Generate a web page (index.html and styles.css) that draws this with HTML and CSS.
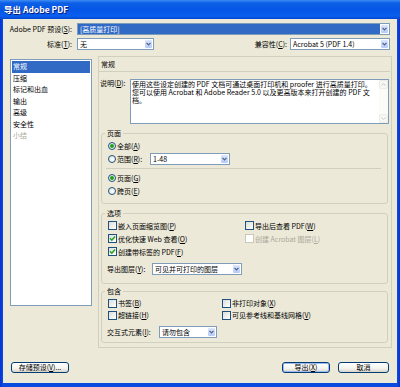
FILE: index.html
```html
<!DOCTYPE html>
<html lang="zh-CN">
<head>
<meta charset="utf-8">
<title>导出 Adobe PDF</title>
<link rel="stylesheet" href="styles.css">
</head>
<body>
<div class="window">
  <div class="titlebar"><span class="title">导出 Adobe PDF</span></div>
  <div class="client">
    <div class="row row-preset">
      <span class="lbl lbl-main">Adobe PDF 预设(<u>S</u>):</span>
      <div class="select select-hl grow"><span class="val">[高质量打印]</span><span class="arrow"><svg width="5" height="4" viewBox="0 0 5 4"><polyline points="0.5,0.8 2.5,2.8 4.5,0.8" fill="none" stroke="#4D6185" stroke-width="1.2"/></svg></span></div>
    </div>
    <div class="row row-std">
      <span class="lbl lbl-main">标准(<u>T</u>):</span>
      <div class="select w-std"><span class="val">无</span><span class="arrow"><svg width="5" height="4" viewBox="0 0 5 4"><polyline points="0.5,0.8 2.5,2.8 4.5,0.8" fill="none" stroke="#4D6185" stroke-width="1.2"/></svg></span></div>
      <span class="spacer"></span>
      <span class="lbl lbl-compat">兼容性(<u>C</u>):</span>
      <div class="select w-compat"><span class="val">Acrobat 5 (PDF 1.4)</span><span class="arrow"><svg width="5" height="4" viewBox="0 0 5 4"><polyline points="0.5,0.8 2.5,2.8 4.5,0.8" fill="none" stroke="#4D6185" stroke-width="1.2"/></svg></span></div>
    </div>
    <div class="main">
      <ul class="nav">
        <li class="sel">常规</li>
        <li>压缩</li>
        <li>标记和出血</li>
        <li>输出</li>
        <li>高级</li>
        <li>安全性</li>
        <li class="dis">小结</li>
      </ul>
      <div class="panel">
        <div class="panel-head">常规</div>
        <div class="desc-row">
          <span class="desc-lbl">说明(<u>D</u>):</span>
          <div class="desc-box">
            <div class="desc-text"><p class="dl">使用这些设定创建的 PDF 文档可通过桌面打印机和 proofer 进行高质量打印。</p><p class="dl">您可以使用 Acrobat 和 Adobe Reader 5.0 以及更高版本来打开创建的 PDF 文</p><p class="dl">档。</p></div>
            <div class="vscroll">
              <span class="sbtn"><svg width="5" height="3" viewBox="0 0 5 3"><polyline points="0.5,2.5 2.5,0.5 4.5,2.5" fill="none" stroke="#C3C9D6" stroke-width="1"/></svg></span>
              <span class="sbtn"><svg width="5" height="3" viewBox="0 0 5 3"><polyline points="0.5,0.5 2.5,2.5 4.5,0.5" fill="none" stroke="#C3C9D6" stroke-width="1"/></svg></span>
            </div>
          </div>
        </div>

        <fieldset class="grp grp-pages">
          <legend>页面</legend>
          <div class="opt h12"><span class="radio on"></span>全部(<u>A</u>)</div>
          <div class="opt"><span class="radio"></span><span class="range-lbl">范围(<u>R</u>):</span><div class="select w-range"><span class="val">1-48</span><span class="arrow"><svg width="5" height="4" viewBox="0 0 5 4"><polyline points="0.5,0.8 2.5,2.8 4.5,0.8" fill="none" stroke="#4D6185" stroke-width="1.2"/></svg></span></div></div>
          <div class="sep"></div>
          <div class="opt"><span class="radio on"></span>页面(<u>G</u>)</div>
          <div class="opt"><span class="radio"></span>跨页(<u>E</u>)</div>
        </fieldset>

        <fieldset class="grp grp-opts">
          <legend>选项</legend>
          <div class="opt-grid opt-grid-a">
            <div class="opt"><span class="chk"></span>嵌入页面缩览图(<u>P</u>)</div>
            <div class="opt"><span class="chk"></span>导出后查看 PDF(<u>W</u>)</div>
            <div class="opt"><span class="chk on"><svg width="7" height="7" viewBox="0 0 7 7"><path d="M1 3.3 L2.8 5.2 L6 1.4" fill="none" stroke="#21A121" stroke-width="1.5"/></svg></span>优化快速 Web 查看(<u>O</u>)</div>
            <div class="opt dis"><span class="chk dis"></span>创建 Acrobat 图层(<u>L</u>)</div>
            <div class="opt"><span class="chk on"><svg width="7" height="7" viewBox="0 0 7 7"><path d="M1 3.3 L2.8 5.2 L6 1.4" fill="none" stroke="#21A121" stroke-width="1.5"/></svg></span>创建带标签的 PDF(<u>F</u>)</div>
          </div>
          <div class="sel-row sel-row-a"><span class="sel-lbl w-lay">导出图层(<u>Y</u>):</span><div class="select w-layers"><span class="val">可见并可打印的图层</span><span class="arrow"><svg width="5" height="4" viewBox="0 0 5 4"><polyline points="0.5,0.8 2.5,2.8 4.5,0.8" fill="none" stroke="#4D6185" stroke-width="1.2"/></svg></span></div></div>
        </fieldset>

        <fieldset class="grp grp-incl">
          <legend>包含</legend>
          <div class="opt-grid opt-grid-b">
            <div class="opt h12"><span class="chk"></span>书签(<u>B</u>)</div>
            <div class="opt h12"><span class="chk"></span>非打印对象(<u>X</u>)</div>
            <div class="opt h12"><span class="chk"></span>超链接(<u>H</u>)</div>
            <div class="opt h12"><span class="chk"></span>可见参考线和基线网格(<u>V</u>)</div>
          </div>
          <div class="sel-row sel-row-b"><span class="sel-lbl w-int">交互式元素(<u>I</u>):</span><div class="select w-inter"><span class="val">请勿包含</span><span class="arrow"><svg width="5" height="4" viewBox="0 0 5 4"><polyline points="0.5,0.8 2.5,2.8 4.5,0.8" fill="none" stroke="#4D6185" stroke-width="1.2"/></svg></span></div></div>
        </fieldset>
      </div>
    </div>
    <div class="buttons">
      <span class="btn btn-save">存储预设(<u>V</u>)...</span>
      <span class="spacer"></span>
      <span class="btn btn-ok">导出(<u>X</u>)</span>
      <span class="btn btn-cancel">取消</span>
    </div>
  </div>
</div>
</body>
</html>
```
FILE: styles.css
```css
html, body { margin: 0; padding: 0; }
body {
  width: 400px; height: 387px; overflow: hidden;
  font-family: "Noto Sans CJK SC", "Noto Sans", sans-serif;
  font-size: 7px; color: #000; background: #ECE9D8;
}
u { text-decoration-thickness: 0.5px; text-underline-offset: 1px; }
.window {
  width: 400px; height: 387px; display: flex; flex-direction: column;
  background: linear-gradient(to right, #0831D9, #0A4BDE 3px, #0A4BDE 397px, #0831D9);
}
.titlebar {
  height: 19px; flex: none; display: flex; align-items: center; padding-left: 4px;
  background: linear-gradient(to bottom, #3D8CF5 0, #0C5FE6 3px, #0556E6 10px, #0A5FEE 16px, #0447D0 19px);
}
.title {
  color: #fff; font-weight: bold; font-size: 8.5px; line-height: 10px;
  text-shadow: 1px 1px 0 #0A1E80; margin-top: -2px;
}
.client {
  flex: 1; margin: 0 3px 4px 3px; background: #ECE9D8;
  display: flex; flex-direction: column;
}
.row { display: flex; align-items: center; height: 12px; padding-right: 7px; }
.row-preset { margin-top: 4px; }
.row-std { margin-top: 3px; }
.lbl { line-height: 12px; white-space: nowrap; }
.lbl-main { width: 69px; text-align: right; margin-right: 5px; flex: none; }
.lbl-compat { margin-right: 3px; }
.spacer { flex: 1; }
.grow { flex: 1; }

.select {
  display: flex; align-items: center; height: 12px; box-sizing: border-box;
  border: 1px solid #7F9DB9; background: #fff; flex: none;
}
.select.grow { flex: 1; }
.select .val { flex: 1; padding-left: 2px; line-height: 10px; white-space: nowrap; overflow: hidden; }
.select .arrow {
  width: 9px; height: 10px; flex: none; box-sizing: border-box;
  border: 1px solid #fff; border-radius: 2px;
  background: linear-gradient(#DCE7FD, #B6CAF7);
  display: flex; align-items: center; justify-content: center;
}
.select-hl .val { background: #316AC5; color: #fff; height: 10px; line-height: 10px; padding-left: 2px; }
.w-std { width: 77px; }
.w-compat { width: 100px; }
.w-range { width: 80px; }
.w-layers { width: 90px; }
.w-inter { width: 58px; }

.main { display: flex; align-items: flex-start; margin-top: 6px; padding-left: 7px; }
.nav {
  list-style: none; margin: 3px 0 0 0; padding: 1px; width: 82px; height: 247px;
  box-sizing: border-box; border: 1px solid #7F9DB9; background: #fff; flex: none;
}
.nav li { height: 11.5px; line-height: 11.5px; padding-left: 1px; white-space: nowrap; }
.nav li.sel { background: #316AC5; color: #fff; }
.nav li.dis { color: #ACA899; }

.panel {
  margin-left: 6px; width: 294px; box-sizing: border-box; flex: none;
  border: 1px solid #D0D0BF; padding: 0 1px 4px 0;
}
.panel-head { height: 14px; line-height: 14px; padding-left: 2px; border-bottom: 1px solid #D0D0BF; }
.desc-row { display: flex; margin-top: 7px; }
.desc-lbl { width: 30px; margin-left: 1px; line-height: 9px; white-space: nowrap; flex: none; }
.desc-box {
  width: 259px; height: 45px; box-sizing: border-box; flex: none;
  border: 1px solid #7F9DB9; background: #fff; display: flex;
}
.desc-text { flex: 1; padding-left: 1px; white-space: nowrap; overflow: hidden; }
.dl { margin: 0; height: 8px; line-height: 8px; }
.vscroll {
  width: 9px; flex: none; display: flex; flex-direction: column; justify-content: space-between;
  background: #FBFBF8;
}
.sbtn {
  height: 9px; box-sizing: border-box; border: 1px solid #EEEDE5; border-radius: 2px;
  background: #F7F7F3; display: flex; align-items: center; justify-content: center;
}

.grp {
  margin: 4px 2px 0 2px; padding: 0; border: 1px solid #D0D0BF; border-radius: 3px; min-width: 0;
}
.grp legend { margin-left: 3px; padding: 0 2px; line-height: 10px; height: 10px; }
.grp-pages { padding: 2px 0 6px 0; }
.grp-opts { padding: 1px 0 8px 0; }
.grp-incl { margin-top: 2px; padding: 1px 0 4px 0; }

.opt { display: flex; align-items: center; height: 13px; padding-left: 6px; white-space: nowrap; }
.opt.h12 { height: 12px; }
.opt.dis { color: #ACA899; }
.radio {
  width: 8px; height: 8px; box-sizing: border-box; flex: none; margin-right: 1px;
  border: 1px solid #1C5180; border-radius: 50%;
  background: radial-gradient(circle at 60% 60%, #fff, #DCDCD7);
  display: flex; align-items: center; justify-content: center;
}
.radio.on::after { content: ""; width: 4px; height: 4px; border-radius: 50%; background: #21A121; }
.range-lbl { width: 33px; flex: none; }
.sep { margin: 3px 6px 2px 4px; border-top: 1px solid #D0D0BF; }
.chk {
  width: 9px; height: 9px; box-sizing: border-box; flex: none; margin-right: 1px;
  border: 1px solid #1C5180; background: linear-gradient(135deg, #DCDCD7, #fff);
  display: flex; align-items: center; justify-content: center;
}
.chk.dis { border-color: #CAC8BB; background: #fff; }
.opt-grid { display: grid; padding-left: 6px; }
.opt-grid .opt { padding-left: 0; }
.opt-grid-a { grid-template-columns: 137px 1fr; }
.opt-grid-b { grid-template-columns: 114px 1fr; }
.sel-row { display: flex; align-items: center; height: 13px; padding-left: 5px; }
.sel-row-a { margin-top: 4px; }
.sel-row-b { margin-top: 5px; height: 12px; }
.sel-lbl { white-space: nowrap; flex: none; }
.w-lay { width: 45px; }
.w-int { width: 52px; }

.buttons { display: flex; margin-top: 14px; padding: 0 8px; height: 11px; }
.btn {
  height: 11px; box-sizing: border-box; border: 1px solid #003C74; border-radius: 3px;
  background: linear-gradient(#FFFFFF, #F3F3EE 60%, #D8D3C8);
  display: flex; align-items: center; justify-content: center; line-height: 9px; white-space: nowrap;
}
.btn-save { width: 58px; }
.btn-ok { width: 48px; box-shadow: inset 0 0 0 1px #9DBBF0; }
.btn-cancel { width: 51px; margin-left: 8px; }
```
